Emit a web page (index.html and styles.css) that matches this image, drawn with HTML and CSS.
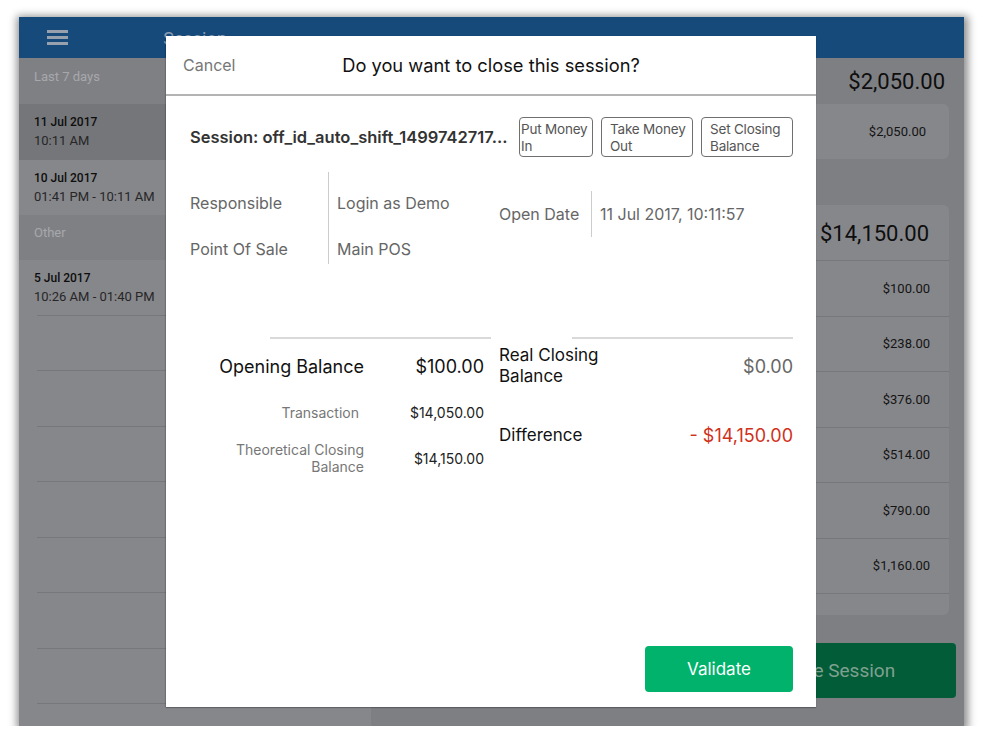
FILE: index.html
```html
<!DOCTYPE html>
<html lang="en">
<head>
<meta charset="utf-8">
<title>Close Session</title>
<link rel="stylesheet" href="styles.css">
</head>
<body>
<div class="stage">
  <div class="frame">
    <header class="topbar">
      <div class="topbar-left">
        <span class="burger"><i></i><i></i><i></i></span>
        <span class="topbar-title">Session</span>
      </div>
    </header>
    <div class="main">
      <aside class="sidebar">
        <div class="section-head">Last 7 days</div>
        <div class="row row--selected">
          <div class="row-date">11 Jul 2017</div>
          <div class="row-time">10:11 AM</div>
        </div>
        <div class="row row--short">
          <div class="row-date">10 Jul 2017</div>
          <div class="row-time">01:41 PM - 10:11 AM</div>
        </div>
        <div class="section-head section-head--short">Other</div>
        <div class="row row--lined">
          <div class="row-date">5 Jul 2017</div>
          <div class="row-time">10:26 AM - 01:40 PM</div>
        </div>
        <div class="row row--lined"></div>
        <div class="row row--lined"></div>
        <div class="row row--lined"></div>
        <div class="row row--lined"></div>
        <div class="row row--lined"></div>
        <div class="row row--lined"></div>
        <div class="row row--lined"></div>
      </aside>
      <section class="panel">
        <div class="panel-total">$2,050.00</div>
        <div class="card card--single">$2,050.00</div>
        <div class="card card--list">
          <div class="card-head">$14,150.00</div>
          <div class="card-row">$100.00</div>
          <div class="card-row">$238.00</div>
          <div class="card-row">$376.00</div>
          <div class="card-row">$514.00</div>
          <div class="card-row">$790.00</div>
          <div class="card-row">$1,160.00</div>
          <div class="card-row"></div>
        </div>
        <div class="panel-actions">
          <div class="close-btn">Close Session</div>
        </div>
      </section>
    </div>

    <div class="modal">
      <div class="modal-head">
        <span class="modal-cancel">Cancel</span>
        <span class="modal-title">Do you want to close this session?</span>
      </div>
      <div class="modal-body">
        <div class="session-row">
          <div class="session-name">Session: off_id_auto_shift_1499742717…</div>
          <div class="session-btn session-btn--tight">Put Money<br>In</div>
          <div class="session-btn">Take Money<br>Out</div>
          <div class="session-btn">Set Closing<br>Balance</div>
        </div>

        <div class="cols info">
          <div class="info-grid">
            <div class="info-label">Responsible</div>
            <div class="info-divider"></div>
            <div class="info-value">Login as Demo</div>
            <div class="info-label">Point Of Sale</div>
            <div class="info-value">Main POS</div>
          </div>
          <div class="info-grid info-grid--right">
            <div class="info-label info-label--center">Open Date</div>
            <div class="info-divider info-divider--one"></div>
            <div class="info-value info-value--center">11 Jul 2017, 10:11:57</div>
          </div>
        </div>

        <div class="cols balances">
          <div class="bal-col">
            <div class="bal-rule"></div>
            <div class="bal-grid">
              <div class="bal-label bal-label--main">Opening Balance</div>
              <div class="bal-value bal-value--main">$100.00</div>
              <div class="bal-label bal-label--inset">Transaction</div>
              <div class="bal-value">$14,050.00</div>
              <div class="bal-label">Theoretical Closing<br>Balance</div>
              <div class="bal-value">$14,150.00</div>
            </div>
          </div>
          <div class="bal-col bal-col--right">
            <div class="bal-rule"></div>
            <div class="real-row">
              <div class="real-label">Real Closing<br>Balance</div>
              <div class="real-value">$0.00</div>
            </div>
            <div class="real-row real-row--diff">
              <div class="real-label">Difference</div>
              <div class="real-value real-value--neg">- $14,150.00</div>
            </div>
          </div>
        </div>
      </div>
      <div class="modal-foot">
        <div class="validate-btn">Validate</div>
      </div>
    </div>
  </div>
</div>
</body>
</html>
```

FILE: styles.css
```css
* { box-sizing: border-box; }

html, body {
  margin: 0;
  padding: 0;
  background: #ffffff;
}

body {
  font-family: Roboto, "Liberation Sans", sans-serif;
}

.stage {
  padding: 17px 0 0 19px;
}

.frame {
  position: relative;
  width: 945px;
  height: 709px;
  display: flex;
  flex-direction: column;
  background: #7e7f83;
  box-shadow: 1px 2px 8px 3px rgba(0, 0, 0, 0.45);
  overflow: hidden;
}

/* ---------- top bar ---------- */
.topbar {
  height: 41px;
  flex: none;
  background: #154a7b;
  display: flex;
}

.topbar-left {
  width: 352px;
  position: relative;
  display: flex;
  align-items: center;
  justify-content: center;
}

.burger {
  position: absolute;
  left: 28px;
  top: 13px;
  width: 21px;
  display: flex;
  flex-direction: column;
  gap: 3px;
}

.burger i {
  display: block;
  height: 3px;
  background: #97a1ad;
}

.topbar-title {
  font-size: 18px;
  color: #8d9db1;
  margin-top: 2px;
}

/* ---------- main ---------- */
.main {
  flex: 1;
  display: flex;
  min-height: 0;
}

.sidebar {
  width: 352px;
  flex: none;
  background: #86878b;
  overflow: hidden;
}

.section-head {
  height: 46px;
  padding: 11px 0 0 15px;
  font-size: 13px;
  line-height: 16px;
  color: #a7a8ac;
  background: #7f8084;
}

.section-head--short {
  height: 45px;
  padding-top: 10px;
}

.row {
  height: 55.5px;
  padding: 10px 0 0 15px;
}

.row--selected {
  height: 56px;
  background: #75767a;
}

.row--short {
  height: 55px;
}

.row--lined {
  background: linear-gradient(#76777b, #76777b) right bottom / calc(100% - 18px) 1px no-repeat;
}

.row-date {
  font-size: 12px;
  line-height: 17px;
  font-weight: 500;
  color: #0d0d0d;
}

.row-time {
  font-size: 13px;
  line-height: 20px;
  color: #262627;
}

/* ---------- right panel ---------- */
.panel {
  flex: 1;
  display: flex;
  flex-direction: column;
  padding: 0 15px 0 18px;
  background: #7e7f83;
}

.panel-total {
  height: 46px;
  display: flex;
  align-items: center;
  justify-content: flex-end;
  padding-right: 4px;
  font-size: 22px;
  color: #0e0e0e;
}

.card {
  background: #86878b;
  border-radius: 6px;
}

.card--single {
  height: 55px;
  display: flex;
  align-items: center;
  justify-content: flex-end;
  padding-right: 23px;
  font-size: 13px;
  color: #141414;
}

.card--list {
  margin-top: 46px;
  height: 410px;
  overflow: hidden;
}

.card-head {
  height: 56px;
  display: flex;
  align-items: center;
  justify-content: flex-end;
  padding: 2px 20px 0 0;
  font-size: 22px;
  color: #0e0e0e;
  border-bottom: 1px solid #76777b;
}

.card-row {
  height: 55.5px;
  flex: none;
  display: flex;
  align-items: center;
  justify-content: flex-end;
  padding-right: 19px;
  font-size: 13px;
  color: #141414;
  border-bottom: 1px solid #76777b;
}

.panel-actions {
  margin-top: 28px;
  display: flex;
  justify-content: flex-end;
  margin-right: -7px;
}

.close-btn {
  width: 241px;
  height: 55px;
  border-radius: 4px;
  background: #035c38;
  color: #7fa18f;
  font-size: 19px;
  display: flex;
  align-items: center;
  justify-content: center;
}

/* ---------- modal ---------- */
.modal {
  position: absolute;
  left: 147px;
  top: 19px;
  width: 650px;
  height: 671px;
  background: #ffffff;
  display: flex;
  flex-direction: column;
  box-shadow: 0 1px 1px rgba(0, 0, 0, 0.25), -1px 0 1px rgba(0, 0, 0, 0.12);
  font-family: Inter, "Noto Sans", sans-serif;
}

.modal-head {
  height: 60px;
  flex: none;
  position: relative;
  display: flex;
  align-items: center;
  justify-content: center;
  border-bottom: 2px solid #b3b3b3;
}

.modal-cancel {
  position: absolute;
  left: 17px;
  top: 19px;
  font-size: 16px;
  color: #777777;
}

.modal-title {
  font-size: 18.3px;
  color: #111111;
}

.modal-body {
  flex: 1;
  padding: 21px 23px 0 24px;
}

.session-row {
  display: flex;
  align-items: center;
  height: 40px;
}

.session-name {
  flex: 1;
  min-width: 0;
  white-space: nowrap;
  overflow: hidden;
  font-size: 16.5px;
  font-weight: 600;
  color: #333333;
}

.session-btn {
  width: 92px;
  height: 40px;
  flex: none;
  margin-left: 8px;
  padding: 3px 0 0 8px;
  border: 1px solid #6f6f6f;
  border-radius: 4px;
  font-size: 13.5px;
  line-height: 17px;
  letter-spacing: -0.2px;
  white-space: nowrap;
  overflow: hidden;
  color: #555555;
}

.session-btn--tight {
  width: 74px;
  margin-left: 11px;
  padding-left: 1px;
}

.cols {
  display: grid;
  grid-template-columns: 301px 294px;
  column-gap: 8px;
}

.info {
  margin-top: 15px;
  height: 92px;
}

.info-grid {
  display: grid;
  grid-template-columns: 138px 1px auto;
  grid-template-rows: 46px 46px;
  font-size: 16px;
  color: #666666;
}

.info-grid--right {
  grid-template-columns: 92px 1px auto;
  grid-template-rows: 46px;
  margin-top: 19px;
}

.info-label {
  padding-top: 21px;
  line-height: 20px;
  grid-column: 1;
}

.info-value {
  padding-top: 21px;
  padding-left: 8px;
  line-height: 20px;
  grid-column: 3;
}

.info-label--center,
.info-value--center {
  padding-top: 13px;
}

.info-divider {
  grid-column: 2;
  grid-row: 1 / span 2;
  background: #cccccc;
}

.info-divider--one {
  grid-row: 1;
}

.balances {
  margin-top: 73px;
}

.bal-rule {
  height: 2px;
  width: 221px;
  margin-left: auto;
  background: #d9d9d9;
}

.bal-grid {
  margin-top: 4px;
  padding-right: 7px;
  display: grid;
  grid-template-columns: 1fr 112px;
  grid-auto-rows: 46px;
  column-gap: 8px;
  align-items: center;
}

.bal-label {
  text-align: right;
  font-size: 14px;
  line-height: 17px;
  color: #777777;
}

.bal-label--inset {
  padding-right: 5px;
}

.bal-label--main {
  font-size: 18px;
  color: #111111;
}

.bal-value {
  text-align: right;
  font-size: 14px;
  color: #222222;
}

.bal-value--main {
  font-size: 18px;
  color: #111111;
}

.real-row {
  margin-top: 4px;
  height: 46px;
  display: flex;
  align-items: center;
  justify-content: space-between;
}

.real-row--diff {
  margin-top: 23px;
}

.real-label {
  font-size: 17px;
  line-height: 21px;
  color: #111111;
}

.real-value {
  font-size: 18px;
  color: #666666;
}

.real-value--neg {
  color: #d0311b;
}

.modal-foot {
  display: flex;
  justify-content: flex-end;
  padding: 0 23px 15px 0;
}

.validate-btn {
  width: 148px;
  height: 46px;
  border-radius: 4px;
  background: #00b26b;
  color: #ffffff;
  font-size: 17px;
  font-weight: 400;
  display: flex;
  align-items: center;
  justify-content: center;
}
```
